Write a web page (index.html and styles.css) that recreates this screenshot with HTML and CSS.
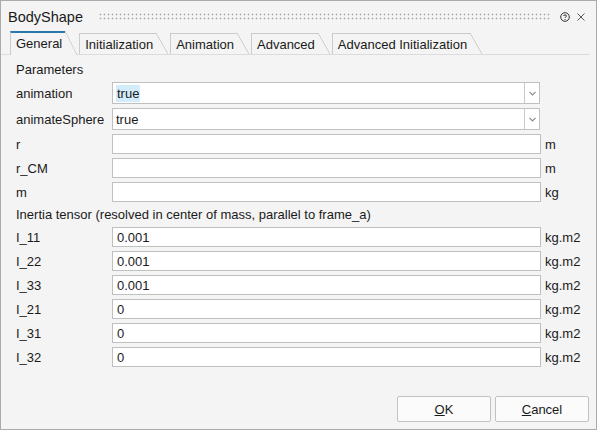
FILE: index.html
```html
<!DOCTYPE html>
<html>
<head>
<meta charset="utf-8">
<link rel="stylesheet" href="styles.css">
</head>
<body>
<div class="window">
  <div class="titlebar">
    <span class="title">BodyShape</span>
    <span class="grip"></span>
    <svg class="help" width="10" height="10" viewBox="0 0 10 10"><circle cx="5" cy="5" r="4.3" fill="none" stroke="#333" stroke-width="1"/><path d="M3.5 4 C3.5 2.6 6.5 2.6 6.5 4 C6.5 5 5 5 5 6" fill="none" stroke="#333" stroke-width="1"/><circle cx="5" cy="7.5" r="0.6" fill="#333"/></svg>
    <svg class="close" width="10" height="10" viewBox="0 0 10 10"><path d="M1.5 1.5 L8.5 8.5 M8.5 1.5 L1.5 8.5" stroke="#444" stroke-width="0.9"/></svg>
  </div>
  <div class="tabs">
    <div class="tab active"><span class="tab-label">General</span><span class="tab-slant"></span></div>
    <div class="tab"><span class="tab-label">Initialization</span><span class="tab-slant"></span></div>
    <div class="tab"><span class="tab-label">Animation</span><span class="tab-slant"></span></div>
    <div class="tab"><span class="tab-label">Advanced</span><span class="tab-slant"></span></div>
    <div class="tab"><span class="tab-label">Advanced Initialization</span><span class="tab-slant"></span></div>
  </div>
  <div class="content">
    <div class="section">Parameters</div>
    <div class="label">animation</div>
    <div class="combo"><span class="combo-text"><span class="sel">true</span></span><span class="combo-btn"><svg width="7" height="5" viewBox="0 0 7 5"><path d="M0.5 0.8 L3.5 3.8 L6.5 0.8" fill="none" stroke="#8a8a8a" stroke-width="1.2"/></svg></span></div>
    <div class="unit"></div>
    <div class="label">animateSphere</div>
    <div class="combo"><span class="combo-text">true</span><span class="combo-btn"><svg width="7" height="5" viewBox="0 0 7 5"><path d="M0.5 0.8 L3.5 3.8 L6.5 0.8" fill="none" stroke="#8a8a8a" stroke-width="1.2"/></svg></span></div>
    <div class="unit"></div>
    <div class="label">r</div><div class="field"></div><div class="unit">m</div>
    <div class="label">r_CM</div><div class="field"></div><div class="unit">m</div>
    <div class="label">m</div><div class="field"></div><div class="unit">kg</div>
    <div class="section">Inertia tensor (resolved in center of mass, parallel to frame_a)</div>
    <div class="label">I_11</div><div class="field">0.001</div><div class="unit">kg.m2</div>
    <div class="label">I_22</div><div class="field">0.001</div><div class="unit">kg.m2</div>
    <div class="label">I_33</div><div class="field">0.001</div><div class="unit">kg.m2</div>
    <div class="label">I_21</div><div class="field">0</div><div class="unit">kg.m2</div>
    <div class="label">I_31</div><div class="field">0</div><div class="unit">kg.m2</div>
    <div class="label">I_32</div><div class="field">0</div><div class="unit">kg.m2</div>
  </div>
  <div class="footer">
    <button class="btn"><u>O</u>K</button>
    <button class="btn"><u>C</u>ancel</button>
  </div>
</div>
</body>
</html>
```
FILE: styles.css
```css
html, body {
  margin: 0;
  padding: 0;
}
.window {
  width: 597px;
  height: 430px;
  box-sizing: border-box;
  border: 1px solid #ababab;
  background: #f4f4f4;
  display: flex;
  flex-direction: column;
  font-family: "Liberation Sans", Arial, sans-serif;
  font-size: 13px;
  color: #1a1a1a;
}
.titlebar {
  height: 30px;
  display: flex;
  align-items: center;
  padding: 2px 10px 0 7px;
  box-sizing: border-box;
}
.title {
  font-size: 14.5px;
  color: #1a1a1a;
}
.grip {
  flex: 1;
  height: 8px;
  margin: 0 10px 0 16px;
  background-image: radial-gradient(circle at 1.5px 1.5px, #a8a8a8 0.8px, transparent 1.1px);
  background-size: 4px 4px;
}
.help {
  margin-right: 6px;
}
.tabs {
  height: 24px;
  box-sizing: border-box;
  display: flex;
  align-items: flex-end;
  gap: 2px;
  padding-left: 9px;
  margin-right: 6px;
  border-bottom: 1px solid #dcdcdc;
}
.tab {
  display: flex;
  height: 21px;
}
.tab.active {
  height: 24px;
  margin-bottom: -1px;
}
.tab-label {
  display: flex;
  align-items: center;
  padding: 0 3px 0 5px;
  border-top: 1px solid #cbcbcb;
  border-left: 1px solid #cbcbcb;
  background: #f4f4f4;
}
.tab.active .tab-label {
  border-top: 2px solid #2a77b0;
  padding-bottom: 1px;
}
.tab-slant {
  width: 12px;
  background: linear-gradient(to top right, #f4f4f4 calc(50% - 0.7px), #c6c6c6 50%, transparent calc(50% + 0.7px));
}
.content {
  display: grid;
  grid-template-columns: 92px 1fr 44px;
  grid-template-rows: 17px 22px 22px 20px 20px 20px 17px 20px 20px 20px 20px 20px 20px;
  column-gap: 4px;
  row-gap: 4px;
  padding: 6px 7px 0 15px;
}
.section {
  grid-column: 1 / 4;
  display: flex;
  align-items: center;
}
.label {
  display: flex;
  align-items: center;
}
.field {
  box-sizing: border-box;
  border: 1px solid #c0c0c0;
  background: #fff;
  display: flex;
  align-items: center;
  padding-left: 4px;
}
.unit {
  display: flex;
  align-items: center;
}
.combo {
  box-sizing: border-box;
  border: 1px solid #c0c0c0;
  background: #fff;
  display: flex;
  margin-right: 1px;
}
.combo-text {
  flex: 1;
  display: flex;
  align-items: center;
  padding-left: 3px;
}
.sel {
  background: #d3ecfb;
  padding: 1px 1px 1px 1px;
}
.combo-btn {
  width: 14px;
  border-left: 1px solid #c8c8c8;
  display: flex;
  align-items: center;
  justify-content: center;
}
.footer {
  margin-top: auto;
  display: flex;
  justify-content: flex-end;
  gap: 4px;
  padding: 0 7px 7px 0;
}
.btn {
  width: 94px;
  height: 26px;
  box-sizing: border-box;
  border: 1px solid #c2c2c2;
  border-radius: 2px;
  background: #fbfbfb;
  font-family: "Liberation Sans", Arial, sans-serif;
  font-size: 13px;
  color: #1a1a1a;
  padding: 0;
}
```
